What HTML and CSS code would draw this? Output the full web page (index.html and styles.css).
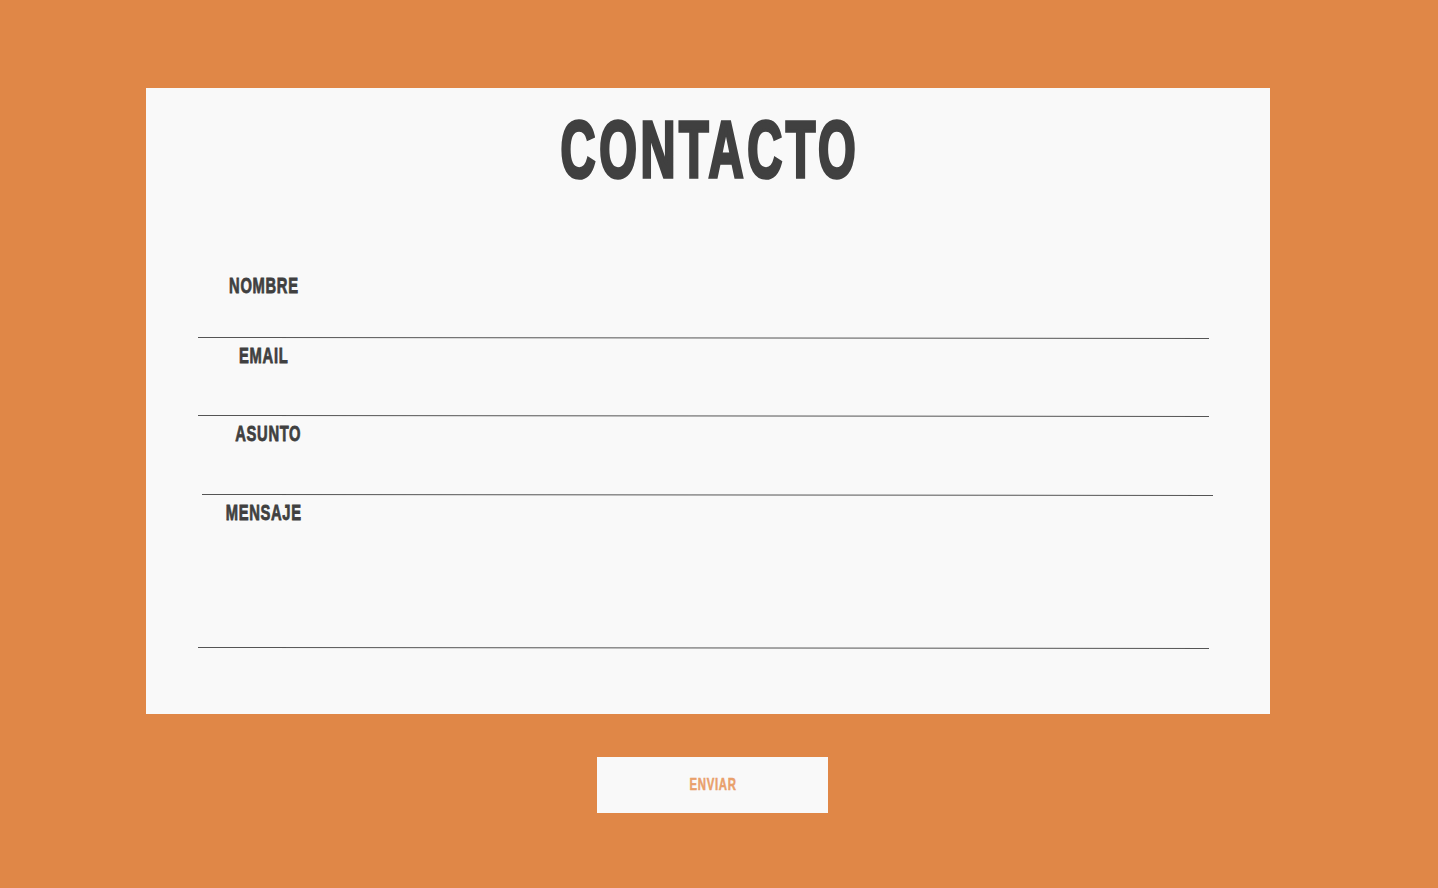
FILE: index.html
```html
<!DOCTYPE html>
<html lang="es">
<head>
<meta charset="utf-8">
<title>Contacto</title>
<link rel="stylesheet" href="styles.css">
</head>
<body>
<main class="page">
  <section class="card">
    <h1 class="title"><span class="squeeze-title">CONTACTO</span></h1>
    <form class="form">
      <div class="field field-1">
        <label class="label"><span class="squeeze">NOMBRE</span></label>
        <div class="input input-1"></div>
        <div class="rule"></div>
      </div>
      <div class="field field-2">
        <label class="label"><span class="squeeze">EMAIL</span></label>
        <div class="input input-2"></div>
        <div class="rule"></div>
      </div>
      <div class="field field-3">
        <label class="label"><span class="squeeze">ASUNTO</span></label>
        <div class="input input-3"></div>
        <div class="rule"></div>
      </div>
      <div class="field field-4">
        <label class="label"><span class="squeeze">MENSAJE</span></label>
        <div class="input input-4"></div>
        <div class="rule"></div>
      </div>
    </form>
  </section>
  <div class="actions">
    <button class="send" type="button"><span class="squeeze-btn">ENVIAR</span></button>
  </div>
</main>
</body>
</html>
```

FILE: styles.css
```css
html, body {
  margin: 0;
  padding: 0;
}
body {
  background: #e08747;
  width: 1438px;
  height: 888px;
  overflow: hidden;
  font-family: "Liberation Sans", Arial, sans-serif;
  font-weight: 700;
  color: #404040;
}
.page {
  padding: 88px 0 0 146px;
}
.card {
  width: 1124px;
  height: 626px;
  box-sizing: border-box;
  background: #f9f9f9;
  padding: 22px 61px 0 52px;
}
.title {
  margin: 0;
  font-size: 80px;
  line-height: 80px;
  text-align: center;
  font-weight: 700;
  padding-left: 12px;
}
.squeeze-title {
  display: inline-block;
  letter-spacing: 6px;
  transform: scaleX(0.605);
  -webkit-text-stroke: 3.6px #404040;
}
.form {
  margin-top: 85px;
}
.field {
  padding-top: 7px;
}
.field-1 {
  padding-top: 0;
}
.field-3 {
  margin-left: 4px;
}
.label {
  display: block;
  width: 130px;
  text-align: center;
  font-size: 22px;
  line-height: 22px;
  padding-left: 1px;
}
.squeeze {
  display: inline-block;
  letter-spacing: 1px;
  transform: scaleX(0.67);
  -webkit-text-stroke: 0.8px #404040;
}
.input-1 { height: 40px; }
.input-2 { height: 48px; }
.input-3 { height: 49px; }
.input-4 { height: 123px; }
.rule {
  width: 1011px;
  border-top: 1px solid #555;
  transform: rotate(0.057deg);
  transform-origin: left center;
}
.actions {
  padding: 43px 0 0 451px;
}
.send {
  width: 231px;
  height: 56px;
  border: 0;
  background: #f9f9f9;
  color: #e9a06b;
  font-family: inherit;
  font-weight: 700;
  font-size: 17px;
  padding: 0 0 0 1px;
  cursor: pointer;
}
.squeeze-btn {
  display: inline-block;
  letter-spacing: 1px;
  transform: scaleX(0.67);
  -webkit-text-stroke: 0.5px #e9a06b;
}
```
